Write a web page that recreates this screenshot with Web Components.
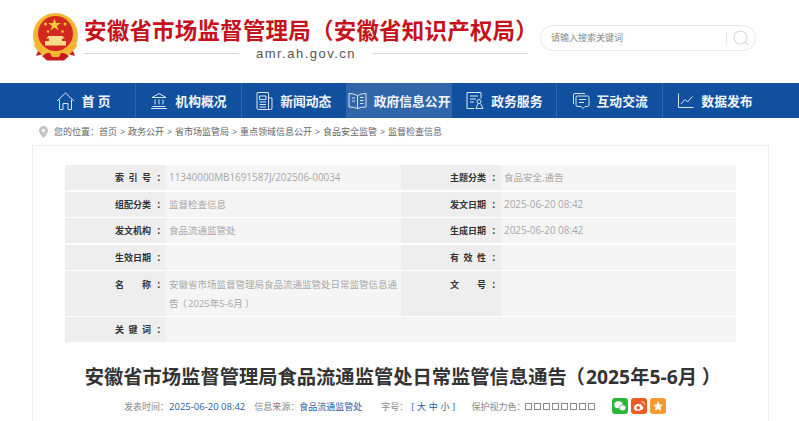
<!DOCTYPE html>
<html lang="zh-CN">
<head>
<meta charset="utf-8">
<title>安徽省市场监督管理局</title>
<style>
    html{ overflow: hidden; }
    body{
        margin: 0;
        background: #fff;
        font-family: "Open Sans", "Noto Sans CJK SC", sans-serif;
    }
</style>
</head>
<body>
<app-header></app-header>
<main-nav>
    <nav-item label="首 页">
        <svg slot="icon" width="19" height="20" viewBox="0 0 19 20"><path d="M1 10 9.500 2 18 10M3.500 8.500V18.500H7V12.500H12V18.500H15.500V8.500"/></svg>
    </nav-item>
    <nav-item label="机构概况">
        <svg slot="icon" width="18" height="18" viewBox="0 0 18 18"><path d="M9 1.500 2 5.500H16ZM1 16.500H17M2.500 14.500H15.500M5 7.500V12.500M9 7.500V12.500M13 7.500V12.500"/></svg>
    </nav-item>
    <nav-item label="新闻动态">
        <svg slot="icon" width="17" height="20" viewBox="0 0 17 20"><path d="M2.500 18.500H14.500Q16 18.500 16 17V7H12.500M12.500 18V2Q12.500 1.500 12 1.500H1.500Q1 1.500 1 2V17Q1 18.500 2.500 18.500M3.500 5H10V8.500H3.500ZM3.500 11H10M3.500 13.500H10M3.500 16H10"/></svg>
    </nav-item>
    <nav-item label="政府信息公开" active>
        <svg slot="icon" width="19" height="18" viewBox="0 0 19 18"><path d="M9.500 3.500Q6 1.500 1 1.500V15Q6 15 9.500 16.500 13 15 18 15V1.500Q13 1.500 9.500 3.500ZM9.500 3.500V16.500M4 6H7M4 9H7M12 5.500H15.500M12 8.500H15.500M12 11.500H15.500"/></svg>
    </nav-item>
    <nav-item label="政务服务">
        <svg slot="icon" width="18" height="19" viewBox="0 0 18 19"><path d="M15 7.500V1.500H1V17.500H8.500M4 5H12M4 8H10M4 11H8M13 8.500A2 2 0 1 1 13 12.500 2 2 0 1 1 13 8.500ZM12 12.500 10 17.500H17L14.500 12.500"/></svg>
    </nav-item>
    <nav-item label="互动交流">
        <svg slot="icon" width="18" height="18" viewBox="0 0 18 18"><path d="M1.500 12V3Q1.500 1.500 3 1.500H13M5.500 4H15.500Q17 4 17 5.500V13Q17 14.500 15.500 14.500H13L11 16.500 9 14.500H5.500Q4 14.500 4 13V5.500Q4 4 5.500 4ZM7 7.500H14M7 10.500H12"/></svg>
    </nav-item>
    <nav-item label="数据发布">
        <svg slot="icon" width="16" height="15" viewBox="0 0 16 15"><path d="M.5 .5V14.500H15.500M3 11 7 6.500 9.500 9 14.500 3.500"/></svg>
    </nav-item>
</main-nav>
<bread-crumb></bread-crumb>
<doc-card>
    <meta-table>
        <meta-row label="索 引 号：" value="11340000MB1691587J/202506-00034" label2="主题分类：" value2="食品安全,通告"></meta-row>
        <meta-row label="组配分类：" value="监督检查信息" label2="发文日期：" value2="2025-06-20 08:42"></meta-row>
        <meta-row label="发文机构：" value="食品流通监管处" label2="生成日期：" value2="2025-06-20 08:42"></meta-row>
        <meta-row label="生效日期：" value="" label2="有 效 性：" value2=""></meta-row>
        <meta-row tall label="名　　称：" value="安徽省市场监督管理局食品流通监管处日常监管信息通&#10;告（2025年5-6月）" label2="文　　号：" value2=""></meta-row>
        <meta-row wide label="关 键 词：" value=""></meta-row>
    </meta-table>
    <doc-title text="安徽省市场监督管理局食品流通监管处日常监管信息通告（2025年5-6月）"></doc-title>
    <doc-info></doc-info>
</doc-card>

<script>
// the glyph sits at the edge of its em box here, on the site it sits further in
const nudged = (text, mark, em) => text.replace(mark, `<span style="display:inline-block;width:1em;text-indent:${em}em">${mark}</span>`);
const parens = text => nudged(nudged(text, "（", -.14), "）", .25);

class AppHeader extends HTMLElement{
    constructor(){
        super();
        this.attachShadow({mode: "open"});
        this.shadowRoot.innerHTML = `
            <style>
                :host{
                    display: flex;
                    box-sizing: border-box;
                    height: 83px;
                    padding: 13px 43px 0 33px;
                }
                #emblem{ width: 45px; height: 48px; margin-right: 6px; flex: none; }
                #brand{ width: 444px; flex: none; }
                #name{
                    margin-top: 5px;
                    height: 26px;
                    line-height: 26px;
                    color: #c5121b;
                    font-size: 22.500px;
                    font-weight: 700;
                    letter-spacing: .2px;
                    white-space: nowrap;
                }
                #site{
                    display: flex;
                    align-items: center;
                    gap: 17px;
                    margin-top: 1px;
                    color: #555;
                    font-family: "Liberation Sans", sans-serif;
                    font-size: 13px;
                    letter-spacing: 1.500px;
                    line-height: 18px;
                    white-space: nowrap;
                }
                #site i{ flex: 1; height: 1px; margin-bottom: 2px; background: #d4d4d4; }
                search-box{ margin: 12px 0 0 12px; }
            </style>
            <svg id="emblem" viewBox="0 0 45 48">
                <path d="M7 33 3 43 10 41 14 47H31L35 41 42 43 38 33Z" fill="#c91a1f"/>
                <circle cx="22.500" cy="22.500" r="22.500" fill="#f2b632"/>
                <circle cx="22.500" cy="20.500" r="17.500" fill="#d3281f"/>
                <path d="M21.500 5.500 23 10H28L24 12.800 25.500 17.500 21.500 14.600 17.500 17.500 19 12.800 15 10H20Z" fill="#f7c93e"/>
                <g fill="#f7c93e">
                    <circle cx="12.500" cy="11" r="1.500"/><circle cx="32" cy="11" r="1.500"/>
                    <circle cx="15" cy="18.500" r="1.200"/><circle cx="29.500" cy="18.500" r="1.200"/>
                </g>
                <path d="M13 25.500H32L29.500 23H15.500ZM16 25.500H29V28H33V32.500H12V28H16Z" fill="#f6dc8a"/>
                <path d="M4 28Q8 38 17 39.500L22.500 42 28 39.500Q37 38 41 28L44 33Q38 43 28 44H17Q7 43 1 33Z" fill="#f2b632"/>
                <path d="M9 43 14 40H31L36 43 31 47.500H14Z" fill="#c91a1f"/>
                <path d="M17 40H28L26 44H19Z" fill="#f2b632"/>
            </svg>
            <div id="brand">
                <div id="name">安徽省市场监督管理局（安徽省知识产权局）</div>
                <div id="site"><i></i><span>amr.ah.gov.cn</span><i></i></div>
            </div>
            <search-box></search-box>
        `;
    };
};

class SearchBox extends HTMLElement{
    constructor(){
        super();
        this.attachShadow({mode: "open"});
        this.shadowRoot.innerHTML = `
            <style>
                :host{
                    display: flex;
                    align-items: center;
                    box-sizing: border-box;
                    width: 216px;
                    height: 26px;
                    padding: 0 6px 0 10px;
                    border: 1px solid #e8e8e8;
                    border-radius: 13px;
                    background: #fff;
                }
                #hint{ flex: 1; padding-bottom: 2px; color: #888; font-size: 9px; white-space: nowrap; }
                #bar{ width: 1px; height: 12px; background: #e2e2e2; margin-right: 6px; }
            </style>
            <span id="hint">请输入搜索关键词</span>
            <span id="bar"></span>
            <svg width="16" height="16" viewBox="0 0 16 16" fill="none" stroke="#dcdcdc" stroke-width="1.200">
                <circle cx="7.500" cy="7.500" r="6.500"/><path d="M12 12 15 15"/>
            </svg>
        `;
    };
};

class MainNav extends HTMLElement{
    constructor(){
        super();
        this.attachShadow({mode: "open"});
        this.shadowRoot.innerHTML = `
            <style>
                :host{
                    display: flex;
                    box-sizing: border-box;
                    height: 35px;
                    padding-left: 31px;
                    background: #11509f;
                }
            </style>
            <slot></slot>
        `;
    };
};

class NavItem extends HTMLElement{
    constructor(){
        super();
        this.attachShadow({mode: "open"});
        this.shadowRoot.innerHTML = `
            <style>
                :host{
                    display: flex;
                    align-items: center;
                    justify-content: center;
                    gap: 7px;
                    box-sizing: border-box;
                    width: 105.300px;
                    border-right: 1px solid #2e67ad;
                    color: #f2f6fb;
                    font-size: 12.800px;
                    font-weight: 700;
                    white-space: nowrap;
                }
                :host([active]){ background: #3166ab; }
                :host(:last-child){ border-right: none; }
                ::slotted(svg){
                    fill: none;
                    stroke: #dbe6f3;
                    stroke-width: 1;
                }
            </style>
            <slot name="icon"></slot>
            <span id="label"></span>
        `;
        this.shadowRoot.querySelector("#label").textContent = this.getAttribute("label");
    };
};

class BreadCrumb extends HTMLElement{
    constructor(){
        super();
        this.attachShadow({mode: "open"});
        const trail = ["首页", "政务公开", "省市场监管局", "重点领域信息公开", "食品安全监管", "监督检查信息"];
        this.shadowRoot.innerHTML = `
            <style>
                :host{
                    display: flex;
                    align-items: center;
                    gap: 6px;
                    box-sizing: border-box;
                    height: 27px;
                    padding: 0 0 0 39px;
                    color: #666;
                    font-size: 9px;
                    word-spacing: .6px;
                    white-space: nowrap;
                }
            </style>
            <svg width="9" height="12" viewBox="0 0 9 12">
                <path fill-rule="evenodd" d="M4.500 0A4.500 4.500 0 0 1 9 4.500C9 7.500 4.500 12 4.500 12S0 7.500 0 4.500A4.500 4.500 0 0 1 4.500 0ZM4.500 2.800A1.700 1.700 0 1 0 4.500 6.200 1.700 1.700 0 1 0 4.500 2.800Z" fill="#c4c4c4"/>
            </svg>
            <span>您的位置：${trail.join(" &gt; ")}</span>
        `;
    };
};

class DocCard extends HTMLElement{
    constructor(){
        super();
        this.attachShadow({mode: "open"});
        this.shadowRoot.innerHTML = `
            <style>
                :host{
                    display: block;
                    box-sizing: border-box;
                    width: 737px;
                    height: 276px;
                    margin-left: 32px;
                    padding: 19px 32px 0;
                    border: 1px solid #eeeeee;
                    border-bottom: none;
                    background: #fff;
                }
            </style>
            <slot></slot>
        `;
    };
};

class MetaTable extends HTMLElement{
    constructor(){
        super();
        this.attachShadow({mode: "open"});
        this.shadowRoot.innerHTML = `
            <style>
                :host{
                    display: grid;
                    grid-template-columns: 100%;
                    row-gap: 1.600px;
                }
            </style>
            <slot></slot>
        `;
    };
};

class MetaRow extends HTMLElement{
    constructor(){
        super();
        this.attachShadow({mode: "open"});
        const key = name => `<div class="k">${nudged(name || "", "：", .6)}</div>`;
        const val = text => `<div class="v ${/^\d/.test(text || "") ? "num" : ""}">${parens(text || "").replace("\n", "<br>")}</div>`;
        const cells = this.hasAttribute("wide")
            ? key(this.getAttribute("label")) + `<div class="v span"></div>`
            : key(this.getAttribute("label")) + val(this.getAttribute("value"))
              + key(this.getAttribute("label2")) + val(this.getAttribute("value2"));
        this.shadowRoot.innerHTML = `
            <style>
                :host{
                    display: grid;
                    grid-template-columns: 101px 235px 100px 235px;
                    min-height: 25px;
                    line-height: 25px;
                }
                :host([tall]){ min-height: 44.500px; line-height: 19px; }
                :host([tall]) .k, :host([tall]) .v{ padding-top: 3.500px; padding-bottom: 2.500px; }
                .k{
                    padding-right: 6px;
                    background: #eeeeee;
                    color: #333;
                    font-size: 9px;
                    font-weight: 700;
                    word-spacing: 2.200px;
                    text-align: right;
                    white-space: pre;
                }
                .v{
                    padding: 0 3px;
                    background: #f5f5f5;
                    color: #a8a8a8;
                    font-size: 9.500px;
                }
                .v.num{ font-size: 9.900px; }
                .span{ grid-column: 2 / 5; }
            </style>
            ${cells}
        `;
    };
};

class DocTitle extends HTMLElement{
    constructor(){
        super();
        this.attachShadow({mode: "open"});
        this.shadowRoot.innerHTML = `
            <style>
                :host{
                    display: block;
                    margin-top: 19px;
                    height: 32px;
                    color: #333;
                    font-size: 19.300px;
                    font-weight: 700;
                    line-height: 32px;
                    text-align: center;
                    white-space: nowrap;
                }
            </style>
            ${parens(this.getAttribute("text"))}
        `;
    };
};

class DocInfo extends HTMLElement{
    constructor(){
        super();
        this.attachShadow({mode: "open"});
        this.shadowRoot.innerHTML = `
            <style>
                :host{
                    display: flex;
                    align-items: center;
                    box-sizing: border-box;
                    height: 20px;
                    margin-top: 3px;
                    padding-left: 59px;
                    color: #888;
                    font-size: 9px;
                    white-space: nowrap;
                }
                b{ font-weight: 400; color: #2a5d9f; }
                #date{ font-size: 9.500px; margin-right: 9px; }
                #src{ margin-right: 19px; }
                #size{ margin: 0 16px 0 3px; letter-spacing: .2px; }
                #swatches{ display: flex; gap: 2px; margin-right: 17px; }
                #swatches i{ width: 6.900px; height: 6.900px; box-sizing: border-box; border: 1px solid #8a8a8a; }
                #share{ display: flex; gap: 3px; }
                #share svg{ display: block; border-radius: 3px; }
            </style>
            <span>发表时间：</span><b id="date">2025-06-20 08:42</b>
            <span>信息来源：</span><b id="src">食品流通监管处</b>
            <span>字号：</span><b id="size">[ 大 中 小 ]</b>
            <span>保护视力色：</span>
            <span id="swatches"><i></i><i></i><i></i><i></i><i></i><i></i><i></i><i></i></span>
            <span id="share">
                <svg width="16" height="16" viewBox="0 0 16 16">
                    <rect width="16" height="16" fill="#2eb53c"/>
                    <ellipse cx="6.500" cy="6.800" rx="4.300" ry="3.500" fill="#fff"/>
                    <ellipse cx="10.500" cy="9.800" rx="3.500" ry="2.900" fill="#fff" stroke="#2eb53c" stroke-width=".7"/>
                </svg>
                <svg width="16" height="16" viewBox="0 0 16 16">
                    <rect width="16" height="16" fill="#ef5a22"/>
                    <path d="M7 5.800C4.500 6.300 2.500 8.300 2.800 10.200 3.100 12.200 5.500 13 8 12.700 10.700 12.400 12.600 11 12.400 9.300 12.300 8.300 11 7.900 10.700 7.700 11 6.800 10.500 6 8.800 6.400 8.300 6.600 8 6.700 8 6.500 8.200 5.800 7.800 5.600 7 5.800Z" fill="#fff"/>
                    <circle cx="7.200" cy="9.800" r="1.800" fill="#ef5a22"/>
                    <path d="M10.500 3.500Q13.500 3.500 13.500 6.500" fill="none" stroke="#fff" stroke-width="1"/>
                </svg>
                <svg width="16" height="16" viewBox="0 0 16 16">
                    <rect width="16" height="16" fill="#f49a2f"/>
                    <path d="M8 3 9.500 6.400 13 6.800 10.400 9.100 11.100 12.700 8 10.900 4.900 12.700 5.600 9.100 3 6.800 6.500 6.400Z" fill="#fff"/>
                </svg>
            </span>
        `;
    };
};

customElements.define("app-header", AppHeader);
customElements.define("search-box", SearchBox);
customElements.define("main-nav", MainNav);
customElements.define("nav-item", NavItem);
customElements.define("bread-crumb", BreadCrumb);
customElements.define("doc-card", DocCard);
customElements.define("meta-table", MetaTable);
customElements.define("meta-row", MetaRow);
customElements.define("doc-title", DocTitle);
customElements.define("doc-info", DocInfo);
</script>
</body>
</html>
